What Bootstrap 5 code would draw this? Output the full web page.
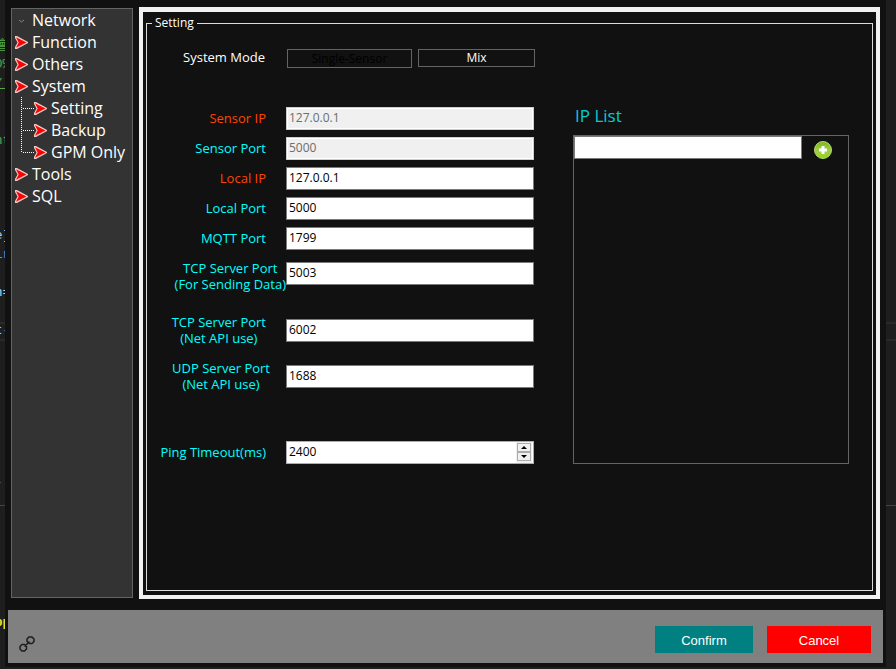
<!DOCTYPE html>
<html lang="en">
<head>
<meta charset="utf-8">
<meta name="viewport" content="width=device-width, initial-scale=1">
<title>Setting</title>
<link href="https://cdn.jsdelivr.net/npm/bootstrap@5.3.0/dist/css/bootstrap.min.css" rel="stylesheet">
<style>
body{font-family:"Open Sans","Noto Sans",sans-serif;font-size:13px;line-height:16px;color:#fff;padding-bottom:2px;
 background:linear-gradient(#292929,#292929) 0 322px/100% 2px no-repeat,linear-gradient(#292929,#292929) 0 339px/100% 2px no-repeat,linear-gradient(#444,#444) 0 505px/100% 1px no-repeat,#1e1e1e}
.editor-edge{width:5px;padding-top:36px;font:13px/19px "Liberation Mono","Noto Sans CJK TC",monospace;color:#57a64a}
.editor-edge span{display:flex;justify-content:center;height:19px;white-space:pre}
.editor-edge .kw{color:#9cdcfe}
.editor-edge .op{color:#569cd6}
.editor-edge .warn{color:#dfe02a;font-weight:bold;margin-top:7px}
.editor-right{width:10px}
.shell{background:#111;min-height:calc(100vh - 2px);padding:0 3px 4px}
.work{padding:7px 3px 11px;gap:6px}
.side{width:122px;background:#333;border:1px solid #646464;margin:1px 0;padding:0 0 0 3px;font-size:16px;line-height:22px}
.side a{color:#fff;text-decoration:none;height:22px;white-space:nowrap}
.side a svg{margin-right:4px;flex:none}
.side .sub a{padding-left:6px}
.side .sub .twig{margin:0}
.frame{border:solid #f2f2f2;border-width:5px 4px 4px;padding:4px 3px}
.group{border:1px solid #dcdcdc;margin:0;padding:0 23px 20px 0}
.group legend{float:none;width:auto;font-size:12px;line-height:14px;margin:0 0 0 5px;padding:0 3px}
.mode{padding:19px 0 39px;gap:6px}
.cap{width:139px;flex:none;padding:0 20px 2px 0;color:#0ff;font-weight:500}
.cap.wide{padding-right:0}
.cap.near{padding-right:16px}
.cap.hot{color:#ff4500}
.mode-name{width:134px;padding-right:16px;font-weight:500}
.btn-mode{width:125px;height:19px;padding:0;border:1px solid #646464;border-radius:0;background:#111;color:#fff;font-size:12px;line-height:16px}
.btn-mode:disabled{color:#000;border-color:#646464;background:#111;opacity:1}
.btn-mode.mix{width:117px;height:18px}
.fields{flex:387 1 0}
.addresses{flex:276 1 0}
.columns{gap:39px}
.line{margin-bottom:7px;min-height:23px}
.box{height:23px;border:1px solid #7a7a7a;border-radius:0;padding:0 2px 2px;font-size:12px;line-height:16px;color:#000;background:#fff;min-width:0}
.box:disabled{background:#f0f0f0;color:#6d6d6d;border-color:#ccc;box-shadow:inset 0 0 0 1px #fff}
.two{height:32px}
.two .cap{padding-bottom:0}
.g-a{margin-top:10px;margin-bottom:22px}
.g-a .box{margin-top:2px}
.g-b{margin-bottom:14px}
.g-c{margin-bottom:49px}
.spin{background:#fff;border:1px solid #abadb3;height:23px;padding-right:1px}
.spin .box{border:0;height:21px}
.steps{width:16px;background:#f0f0f0;padding:1px}
.steps button{height:9px;padding:0;border:1px solid #acacac;background:#f0f0f0;line-height:0}
.ip-title{font-size:17px;line-height:22px;color:#00ced1;font-weight:400;margin:-2px 0 8px 2px}
.ip-panel{border:1px solid #646464;height:329px}
.ip-panel .box{width:228px}
.add{border:0;background:none;padding:0;margin:5px 0 0 12px;line-height:0}
.foot{background:#808080;height:53px;padding:6px 12px 0 11px;gap:14px}
.foot .act{font:13px/16px "Liberation Sans",Arial,sans-serif;color:#fff;border:0;border-radius:0;height:27px;padding:2px 0 0}
.link-btn{border:0;background:none;padding:0;line-height:0;margin-top:8px}
.ok{background:#008080!important;width:98px}
.no{background:#f00!important;width:104px}
</style>
<script src="https://cdn.jsdelivr.net/npm/bootstrap@5.3.0/dist/js/bootstrap.bundle.min.js"></script>
</head>
<body class="d-flex m-0">
<svg width="0" height="0" class="position-absolute" aria-hidden="true">
 <symbol id="arrow" viewBox="0 0 13 13"><path d="M0 0H2L13 6V7L2 13H0V11L2.500 6.500L0 2Z" fill="#f5c8c8"/><path d="M1 1.300L11.500 6.500L1 11.700L3.700 6.500Z" fill="#f00"/></symbol>
 <symbol id="twig" viewBox="0 0 13 22"><path d="M.5 0V22M2 11.500H13" stroke="#fff" stroke-dasharray="1 1" fill="none"/></symbol>
 <symbol id="twigend" viewBox="0 0 13 22"><path d="M.5 0V12M2 11.500H13" stroke="#fff" stroke-dasharray="1 1" fill="none"/></symbol>
</svg>
<div class="editor-edge overflow-hidden flex-shrink-0" aria-hidden="true"><span>會</span><span>0%</span><span class="text-decoration-underline">/:</span><span></span><span>::</span><span>nt</span><span></span><span></span><span></span><span></span><span class="kw">e]</span><span class="op">ir</span><span></span><span class="kw">n=</span><span></span><span class="kw">t-</span><span></span><span></span><span></span><span></span><span></span><span></span><span></span><span class="op">-:</span><span></span><span></span><span></span><span></span><span></span><span></span><span class="warn">pp</span></div>

<div class="shell d-flex flex-column flex-grow-1">
 <div class="work d-flex flex-grow-1">
  <nav class="side flex-shrink-0" aria-label="Sections">
   <ul class="list-unstyled m-0">
    <li><a href="#" class="d-flex align-items-center"><svg width="13" height="13"><path d="M4 6L6.500 8L9 6" fill="none" stroke="#858585"/></svg>Network</a></li>
    <li><a href="#" class="d-flex align-items-center"><svg width="13" height="13"><use href="#arrow"/></svg>Function</a></li>
    <li><a href="#" class="d-flex align-items-center"><svg width="13" height="13"><use href="#arrow"/></svg>Others</a></li>
    <li><a href="#" class="d-flex align-items-center"><svg width="13" height="13"><use href="#arrow"/></svg>System</a>
     <ul class="list-unstyled m-0 sub">
      <li><a href="#" class="d-flex align-items-center"><svg class="twig" width="13" height="22"><use href="#twig"/></svg><svg width="13" height="13"><use href="#arrow"/></svg>Setting</a></li>
      <li><a href="#" class="d-flex align-items-center"><svg class="twig" width="13" height="22"><use href="#twig"/></svg><svg width="13" height="13"><use href="#arrow"/></svg>Backup</a></li>
      <li><a href="#" class="d-flex align-items-center"><svg class="twig" width="13" height="22"><use href="#twigend"/></svg><svg width="13" height="13"><use href="#arrow"/></svg>GPM Only</a></li>
     </ul></li>
    <li><a href="#" class="d-flex align-items-center"><svg width="13" height="13"><use href="#arrow"/></svg>Tools</a></li>
    <li><a href="#" class="d-flex align-items-center"><svg width="13" height="13"><use href="#arrow"/></svg>SQL</a></li>
   </ul>
  </nav>

  <main class="frame flex-grow-1 d-flex">
   <fieldset class="group flex-grow-1">
    <legend>Setting</legend>
    <div class="mode d-flex">
     <span class="mode-name text-end">System Mode</span>
     <button type="button" class="btn btn-mode" disabled>Single-Sensor</button>
     <button type="button" class="btn btn-mode mix">Mix</button>
    </div>
    <div class="columns d-flex">
     <div class="fields">
      <div class="line d-flex align-items-center"><label class="cap hot text-end" for="sip">Sensor IP</label><input class="form-control box" id="sip" value="127.0.0.1" disabled></div>
      <div class="line d-flex align-items-center"><label class="cap text-end" for="sport">Sensor Port</label><input class="form-control box" id="sport" value="5000" disabled></div>
      <div class="line d-flex align-items-center"><label class="cap hot text-end" for="lip">Local IP</label><input class="form-control box" id="lip" value="127.0.0.1"></div>
      <div class="line d-flex align-items-center"><label class="cap text-end" for="lport">Local Port</label><input class="form-control box" id="lport" value="5000"></div>
      <div class="line d-flex align-items-center"><label class="cap text-end" for="mqtt">MQTT Port</label><input class="form-control box" id="mqtt" value="1799"></div>
      <div class="line two g-a d-flex"><label class="cap wide d-flex justify-content-end text-center" for="tcp1"><span>TCP Server Port<br>(For Sending Data)</span></label><input class="form-control box" id="tcp1" value="5003"></div>
      <div class="line two g-b d-flex align-items-center"><label class="cap d-flex justify-content-end text-center" for="tcp2"><span>TCP Server Port<br>(Net API use)</span></label><input class="form-control box" id="tcp2" value="6002"></div>
      <div class="line two g-c d-flex align-items-center"><label class="cap near d-flex justify-content-end text-center" for="udp"><span>UDP Server Port<br>(Net API use)</span></label><input class="form-control box" id="udp" value="1688"></div>
      <div class="line d-flex align-items-center"><label class="cap text-end" for="ping">Ping Timeout(ms)</label>
       <div class="spin d-flex flex-grow-1"><input class="form-control box" id="ping" inputmode="numeric" value="2400">
        <div class="steps d-flex flex-column flex-shrink-0"><button type="button" aria-label="Increase"><svg width="6" height="3"><path d="M0 3L3 0L6 3Z"/></svg></button><button type="button" aria-label="Decrease"><svg width="6" height="3"><path d="M0 0H6L3 3Z"/></svg></button></div></div></div>
     </div>
     <section class="addresses">
      <h2 class="ip-title">IP List</h2>
      <div class="ip-panel d-flex align-items-start"><input class="form-control box" aria-label="IP address">
       <button type="button" class="add" aria-label="Add"><svg width="18" height="18"><defs><linearGradient id="lime" x2="0" y2="1"><stop stop-color="#7cb518"/><stop offset=".5" stop-color="#a0cc4a"/><stop offset="1" stop-color="#8fd81c"/></linearGradient></defs><circle cx="9" cy="9" r="8.500" fill="url(#lime)" stroke="#b4d66a"/><path d="M9 5V13M5 9H13" stroke="#fff" stroke-width="3"/></svg></button></div>
     </section>
    </div>
   </fieldset>
  </main>
 </div>
 <footer class="foot d-flex align-items-center">
  <button type="button" class="link-btn me-auto" aria-label="Connection"><svg width="16" height="16" fill="none" stroke="#1c1c1c" stroke-width="1.500"><path d="M8 3L10 1H13L15 3V5.500L13 7.500H10.500L8 5.500ZM1 10.500L3 8.500H5.500L7.500 10.500V13L5.500 15H3L1 13ZM5.500 10.500L10.500 5.500"/></svg></button>
  <button type="button" class="btn act ok">Confirm</button>
  <button type="button" class="btn act no">Cancel</button>
 </footer>
</div>
<div class="editor-right flex-shrink-0"></div>
</body>
</html>
